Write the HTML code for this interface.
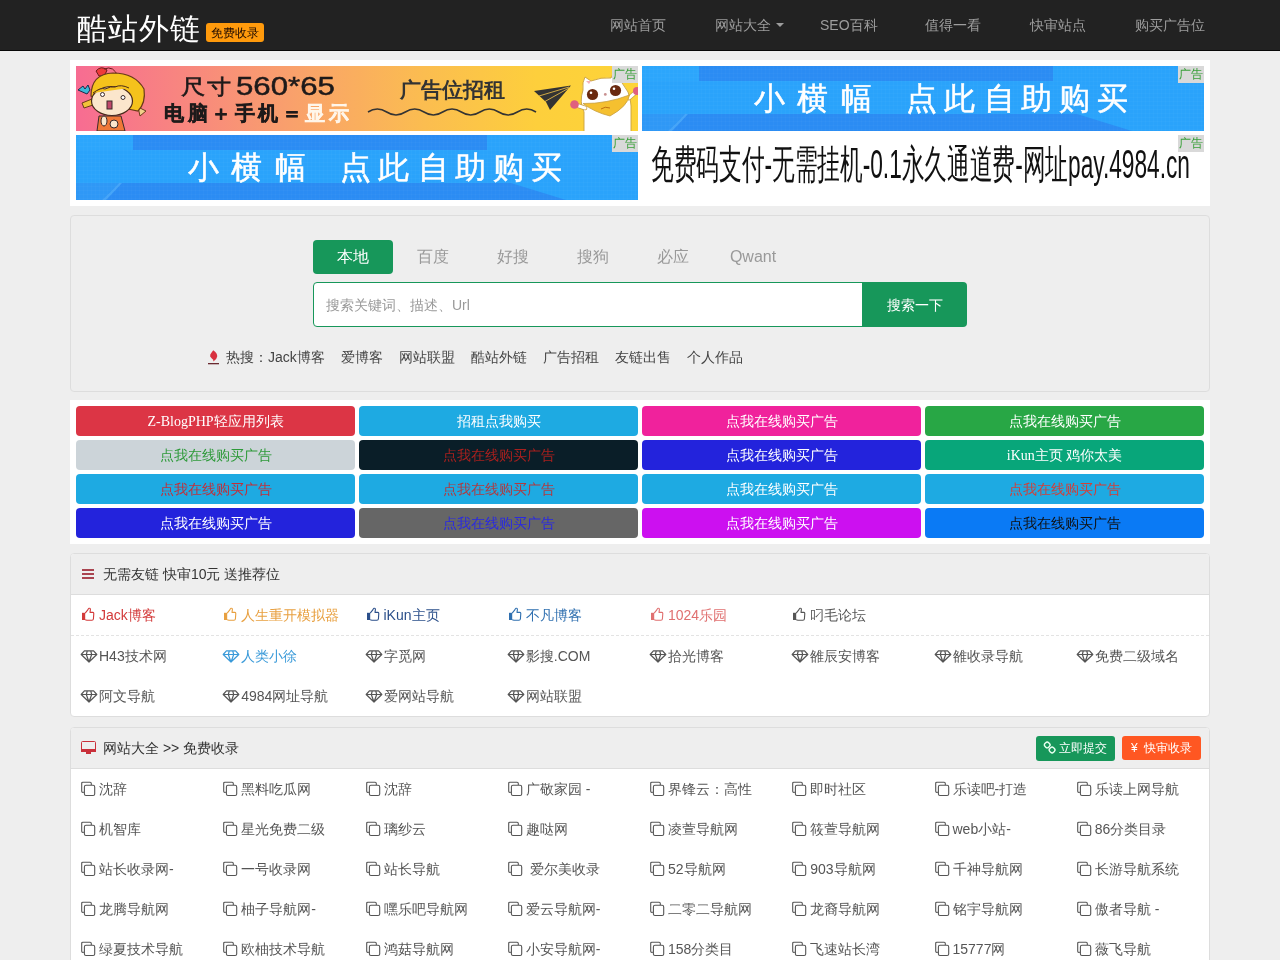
<!DOCTYPE html>
<html>
<head>
<meta charset="utf-8">
<title>酷站外链</title>
<style>
*{box-sizing:border-box;margin:0;padding:0}
html,body{width:1280px;height:960px;overflow:hidden}
body{will-change:transform;background:#eeeeee;font-family:"Liberation Sans",sans-serif;font-size:14px;color:#333;position:relative}
.abs{position:absolute}
#hdr{left:0;top:0;width:1280px;height:51px;background:#222;border-bottom:1px solid #080808}
#logo{left:77px;top:9px;letter-spacing:1px;font-family:"Liberation Serif",serif;font-size:30px;color:#fff;line-height:40px;white-space:nowrap}
#badge{left:206px;top:23px;width:58px;height:19px;background:#ff9a0c;border-radius:3px;font-family:"Liberation Serif",serif;font-size:12px;color:#1a0800;line-height:21px;text-align:center}
.nav{top:15px;font-size:14px;color:#9d9d9d;line-height:20px;white-space:nowrap}
.caret{display:inline-block;width:0;height:0;border-top:4px solid #9d9d9d;border-left:4px solid transparent;border-right:4px solid transparent;vertical-align:middle;margin-left:5px;margin-top:-2px}
#ads{left:70px;top:60px;width:1140px;height:146px;background:#fff}
.ad{width:562px;height:65px;overflow:hidden}
.adlbl{position:absolute;right:0;top:0;width:26px;height:17px;background:#d9d9d9;color:#3aa03a;font-size:12px;line-height:17px;text-align:center}
#search{left:70px;top:215px;width:1140px;height:177px;background:#eee;border:1px solid #ddd;border-radius:4px}
.tab{top:240px;width:80px;height:34px;line-height:34px;text-align:center;font-size:16px;color:#999;border-radius:4px}
.tab.on{background:#17975a;color:#fff}
#inp{left:313px;top:282px;width:550px;height:45px;background:#fff;border:1px solid #17975a;border-radius:4px 0 0 4px;color:#999;font-size:14px;line-height:45px;padding-left:12px}
#sbtn{left:862px;top:282px;width:105px;height:45px;background:#17975a;border-radius:0 4px 4px 0;color:#fff;font-size:14px;line-height:47px;text-align:center}
#hot{left:207px;padding-left:19px;top:347px;line-height:20px;font-size:14px;color:#444;white-space:nowrap}
#hot span{margin-right:16px}
#grid{left:70px;top:400px;width:1140px;height:144px;background:#fff}
.gb{width:279px;height:30px;border-radius:4px;text-align:center;line-height:32px;font-family:"Liberation Serif",serif;font-size:14px;color:#fff;white-space:nowrap}
.panel{left:70px;width:1140px;background:#fff;border:1px solid #ddd;border-radius:4px;overflow:hidden}
.ph{height:41px;background:#eee;border-bottom:1px solid #ddd;position:relative}
.pt{position:absolute;left:32px;top:10px;line-height:20px;font-size:14px;color:#333}
.lk{position:absolute;line-height:20px;font-size:14px;color:#555;white-space:nowrap}
</style>
</head>
<body>
<svg width="0" height="0" style="position:absolute">
<defs>
<symbol id="i-thumb" viewBox="0 0 14 14"><rect x="1" y="5.8" width="3.2" height="7.2" fill="currentColor"/><path d="M4.2 6.2 L6.6 3.2 Q7.4 1.4 8 1.2 Q9.4 1 9.4 2.6 L9 5.4 H12 Q12.8 5.4 12.8 6.4 L12.4 12 Q12.2 13.2 11 13.2 H6 Q4.8 13.2 4.2 12.6" fill="none" stroke="currentColor" stroke-width="1.1" stroke-linejoin="round"/></symbol>
<symbol id="i-dia" viewBox="0 0 18 16"><path d="M4.4 2.9 H13.6 L16.8 6.5 L9 14 L1.2 6.5 Z M1.2 6.5 H16.8 M7.3 2.9 L6.3 6.5 L9 14 M10.7 2.9 L11.7 6.5 L9 14" fill="none" stroke="currentColor" stroke-width="1.2" stroke-linejoin="round"/></symbol>
<symbol id="i-copy" viewBox="0 0 16 16"><path d="M3.8 11.4 H2.8 Q1.7 11.4 1.7 10.2 V2.4 Q1.7 1.2 2.9 1.2 H10.1 Q11.3 1.2 11.3 2.4 V4" fill="none" stroke="currentColor" stroke-width="1.1"/><rect x="4.4" y="4.3" width="10.3" height="10.2" rx="1.6" fill="none" stroke="currentColor" stroke-width="1.1"/></symbol>
</defs></svg>
<div id="hdr" class="abs"></div>
<div id="logo" class="abs">酷站外链</div>
<div id="badge" class="abs">免费收录</div>
<div class="abs nav" style="left:610px">网站首页</div>
<div class="abs nav" style="left:715px">网站大全<span class="caret"></span></div>
<div class="abs nav" style="left:820px">SEO百科</div>
<div class="abs nav" style="left:925px">值得一看</div>
<div class="abs nav" style="left:1030px">快审站点</div>
<div class="abs nav" style="left:1135px">购买广告位</div>

<div id="ads" class="abs"></div>
<div class="abs ad" style="left:76px;top:66px">
<svg width="562" height="65" viewBox="0 0 562 65">
<defs><linearGradient id="g1" x1="0" y1="0" x2="1" y2="0">
<stop offset="0" stop-color="#f76c92"/><stop offset="0.38" stop-color="#f9a06c"/><stop offset="0.62" stop-color="#fbbd50"/><stop offset="0.82" stop-color="#fdcf3c"/><stop offset="1" stop-color="#fdd438"/></linearGradient></defs>
<rect width="562" height="65" fill="url(#g1)"/>
<!-- girl -->
<path d="M20 5 q5 -6 11 -1 q-2 7 -8 6 z" fill="#ee3a3a" stroke="#6a1a1a" stroke-width="1"/>
<path d="M28 3 q10 -4 14 8" fill="none" stroke="#6a1a1a" stroke-width="1"/>
<path d="M2 24 l5 -4 l2 3 l3 -4 l2 5 l-3 4 z" fill="#3cb8d8" stroke="#1a2a4a" stroke-width="1"/>
<path d="M6 37 l10 -4 l1 6 l-9 3 z" fill="#f2c23a" stroke="#6a3a1a" stroke-width="1"/>
<path d="M62 41 l8 4 l-6 5 z" fill="#f2d08a" stroke="#6a3a1a" stroke-width="1"/>
<path d="M15 30 q0 -22 22 -23 q22 0 31 16 q2 14 -6 22 l-10 -2 z" fill="#f5c21c" stroke="#6a3a1a" stroke-width="1.2"/>
<ellipse cx="36" cy="35" rx="20.5" ry="14.5" fill="#fbe6cc" stroke="#4a2a1a" stroke-width="1.2"/>
<path d="M17 27 q8 -6 12 -4 q6 -3 10 -2 q6 -3 14 1" fill="#f5c21c" stroke="#4a2a1a" stroke-width="1"/>
<circle cx="26.5" cy="28.5" r="2" fill="#fff" stroke="#3a2a2a" stroke-width="1"/>
<circle cx="47" cy="31.5" r="2" fill="#fff" stroke="#3a2a2a" stroke-width="1"/>
<rect x="31" y="35" width="5" height="8" fill="#c0486a" stroke="#3a2a2a" stroke-width="1"/>
<path d="M23 50 l-2 15 h28 l-4 -15 z" fill="#f07838" stroke="#3a2a2a" stroke-width="1"/>
<ellipse cx="28" cy="55" rx="3" ry="5" fill="#fbe6cc" stroke="#3a2a2a" stroke-width="1"/>
<ellipse cx="38" cy="58" rx="4" ry="4" fill="#fbe6cc" stroke="#3a2a2a" stroke-width="1"/>
<!-- texts -->
<text transform="translate(105,28) scale(1.15,1)" font-family="Liberation Sans, sans-serif" font-size="21" fill="#1e1a1a" stroke="#1e1a1a" stroke-width="0.6" letter-spacing="1">尺寸</text>
<text transform="translate(160,29) scale(1.2,1)" font-family="Liberation Sans, sans-serif" font-size="26" fill="#1e1a1a" stroke="#1e1a1a" stroke-width="0.5">560*65</text>
<text x="88" y="54" font-family="Liberation Sans, sans-serif" font-size="20" font-weight="bold" fill="#1e1a1a" stroke="#1e1a1a" stroke-width="0.5" letter-spacing="3.5">电脑＋手机＝<tspan fill="#fff6ea" stroke="#fff6ea">显示</tspan></text>
<text x="324" y="31" font-family="Liberation Sans, sans-serif" font-size="21" font-weight="bold" fill="#333">广告位招租</text>
<path d="M292 46 q9.33 -6 18.67 0 t18.67 0 t18.67 0 t18.67 0 t18.67 0 t18.67 0 t18.67 0 t18.67 0 t18.67 0" fill="none" stroke="#333" stroke-width="1.5"/>
<!-- plane -->
<path d="M458 25 L495 19.5 L474 44 L470 36 z" fill="#333"/>
<path d="M463 30 L493 21 M468 36 L493 22" stroke="#f8c84a" stroke-width="0.8"/>
<!-- cat -->
<path d="M508 66 V46 Q503 36 507 24 Q506 16 509 11 L515 15 Q525 11 535 12 L537 8 Q547 16 552 26 Q555 34 555 40 V66 z" fill="#fff" stroke="#c8a040" stroke-width="0.9"/>
<path d="M509 42 L500 39 M553 32 L560 26" stroke="#c8a040" stroke-width="4.5" stroke-linecap="round"/>
<path d="M509 42 L500 39 M553 32 L560 26" stroke="#fff" stroke-width="3" stroke-linecap="round"/>
<circle cx="498.5" cy="38.5" r="4.3" fill="#e0607e"/>
<circle cx="561" cy="25" r="4" fill="#e0607e"/>
<path d="M507 37.5 Q530 38 553.5 29 Q552 40 534 50 Q518 46 507 37.5 z" fill="#f5c030" stroke="#c8a040" stroke-width="0.8"/>
<path d="M525 43 q4 -3 9 -1" stroke="#c07010" stroke-width="1" fill="none"/>
<path d="M510 15 l3 3 l2 -3 z" fill="#f4b0b8"/>
<circle cx="516.5" cy="28.5" r="5.6" fill="#6a2a10"/>
<circle cx="539.5" cy="24.5" r="5.6" fill="#6a2a10"/>
<circle cx="515" cy="26.8" r="1.3" fill="#fff"/><circle cx="538" cy="22.8" r="1.3" fill="#fff"/>
<circle cx="529.3" cy="28.4" r="1.4" fill="#c89090"/>
</svg>
<div class="adlbl">广告</div></div>

<div class="abs ad blue" style="left:642px;top:66px"><svg width="562" height="65" viewBox="0 0 562 65" style="position:absolute;left:0;top:0">
<defs><pattern id="gridp" width="4" height="4" patternUnits="userSpaceOnUse"><path d="M4 0 V4 M0 4 H4" stroke="#ffffff" stroke-opacity="0.035" stroke-width="1"/></pattern></defs>
<rect width="562" height="65" fill="#2b8cf3"/>
<rect x="0" y="0" width="57" height="15" fill="#2ca6fc"/>
<rect x="0" y="15" width="562" height="33" fill="#2aa3fb"/>
<path d="M411 0 H562 V65 H490 L435 48 H411 z" fill="#2aa3fb"/>
<path d="M0 48 H43 Q36 56 26 65 H0 z" fill="#2f98f6"/><path d="M26 65 Q36 56 43 48 H46 Q38 57 30 65 z" fill="#55b4fb" fill-opacity="0.6"/>
<rect width="562" height="65" fill="url(#gridp)"/>
<g font-family="Liberation Sans, sans-serif" font-size="31" fill="#fff" stroke="#fff" stroke-width="0.5">
<text x="112" y="43">小</text><text x="155" y="43">横</text><text x="199" y="43">幅</text>
<text x="264" y="43">点</text><text x="302" y="43">此</text><text x="342" y="43">自</text><text x="379" y="43">助</text><text x="417" y="43">购</text><text x="455" y="43">买</text>
</g></svg>
<div class="adlbl">广告</div></div>
<div class="abs ad blue" style="left:76px;top:135px"><svg width="562" height="65" viewBox="0 0 562 65" style="position:absolute;left:0;top:0">
<defs><pattern id="gridp2" width="4" height="4" patternUnits="userSpaceOnUse"><path d="M4 0 V4 M0 4 H4" stroke="#ffffff" stroke-opacity="0.035" stroke-width="1"/></pattern></defs>
<rect width="562" height="65" fill="#2b8cf3"/>
<rect x="0" y="0" width="57" height="15" fill="#2ca6fc"/>
<rect x="0" y="15" width="562" height="33" fill="#2aa3fb"/>
<path d="M411 0 H562 V65 H490 L435 48 H411 z" fill="#2aa3fb"/>
<path d="M0 48 H43 Q36 56 26 65 H0 z" fill="#2f98f6"/><path d="M26 65 Q36 56 43 48 H46 Q38 57 30 65 z" fill="#55b4fb" fill-opacity="0.6"/>
<rect width="562" height="65" fill="url(#gridp2)"/>
<g font-family="Liberation Sans, sans-serif" font-size="31" fill="#fff" stroke="#fff" stroke-width="0.5">
<text x="112" y="43">小</text><text x="155" y="43">横</text><text x="199" y="43">幅</text>
<text x="264" y="43">点</text><text x="302" y="43">此</text><text x="342" y="43">自</text><text x="379" y="43">助</text><text x="417" y="43">购</text><text x="455" y="43">买</text>
</g></svg>
<div class="adlbl">广告</div></div>
<div class="abs ad" style="left:642px;top:135px;background:#fff">
<div style="position:absolute;left:9px;top:4px;font-size:40px;line-height:50px;color:#111;white-space:nowrap;transform:scaleX(0.567);transform-origin:0 0">免费码支付-无需挂机-0.1永久通道费-网址pay.4984.cn</div>
<div class="adlbl">广告</div></div>


<div id="search" class="abs"></div>
<div class="abs tab on" style="left:313px">本地</div>
<div class="abs tab" style="left:393px">百度</div>
<div class="abs tab" style="left:473px">好搜</div>
<div class="abs tab" style="left:553px">搜狗</div>
<div class="abs tab" style="left:633px">必应</div>
<div class="abs tab" style="left:713px">Qwant</div>
<div id="inp" class="abs">搜索关键词、描述、Url</div>
<div id="sbtn" class="abs">搜索一下</div>
<div id="hot" class="abs"><svg style="position:absolute;left:1px;top:3px" width="12" height="15"><path d="M5.2 0.2 Q9.6 3.2 9.2 6.6 Q8.8 9.6 5.4 11.6 Q5.9 9.6 3.6 8.2 Q1.4 6.6 2.3 4.6 Q3.4 2.6 5.2 0.2 z" fill="#d8303e"/><rect x="0" y="13" width="11" height="1.3" fill="#6a2a30"/></svg>热搜：<span>Jack博客</span><span>爱博客</span><span>网站联盟</span><span>酷站外链</span><span>广告招租</span><span>友链出售</span><span>个人作品</span></div>

<div id="grid" class="abs"></div>
<div class="abs gb" style="left:76px;top:406px;background:#dc3545;color:#fff">Z-BlogPHP轻应用列表</div>
<div class="abs gb" style="left:359px;top:406px;background:#1eaae2;color:#fff">招租点我购买</div>
<div class="abs gb" style="left:642px;top:406px;background:#f0229c;color:#fff">点我在线购买广告</div>
<div class="abs gb" style="left:925px;top:406px;background:#28a745;color:#fff">点我在线购买广告</div>
<div class="abs gb" style="left:76px;top:440px;background:#ccd4d9;color:#2e9a3a">点我在线购买广告</div>
<div class="abs gb" style="left:359px;top:440px;background:#0a1e28;color:#a8201e">点我在线购买广告</div>
<div class="abs gb" style="left:642px;top:440px;background:#2323dc;color:#fff">点我在线购买广告</div>
<div class="abs gb" style="left:925px;top:440px;background:#08a67a;color:#fff">iKun主页 鸡你太美</div>
<div class="abs gb" style="left:76px;top:474px;background:#1eaae2;color:#c0303a">点我在线购买广告</div>
<div class="abs gb" style="left:359px;top:474px;background:#1eaae2;color:#b03a40">点我在线购买广告</div>
<div class="abs gb" style="left:642px;top:474px;background:#1eaae2;color:#fff">点我在线购买广告</div>
<div class="abs gb" style="left:925px;top:474px;background:#1eaae2;color:#d0403a">点我在线购买广告</div>
<div class="abs gb" style="left:76px;top:508px;background:#2323dc;color:#fff">点我在线购买广告</div>
<div class="abs gb" style="left:359px;top:508px;background:#666666;color:#2a2ae0">点我在线购买广告</div>
<div class="abs gb" style="left:642px;top:508px;background:#cc10f0;color:#fff">点我在线购买广告</div>
<div class="abs gb" style="left:925px;top:508px;background:#0a7af5;color:#111">点我在线购买广告</div>

<div class="abs panel" style="top:553px;height:164px">
 <div class="ph"><div class="pt">无需友链 快审10元 送推荐位</div></div>
</div>
<div class="abs" style="left:71px;top:635px;width:1138px;height:0;border-top:1px dashed #e3e3e3"></div>
<svg class="abs" style="left:82px;top:569px" width="12" height="10"><rect y="0" width="12" height="2" fill="#a94450"/><rect y="4" width="12" height="2" fill="#a94450"/><rect y="8" width="12" height="2" fill="#a94450"/></svg>
<svg class="abs" style="left:81.00px;top:607px;color:#d33a3a" width="14" height="14"><use href="#i-thumb"/></svg><div class="lk" style="left:99.00px;top:605px;color:#d33a3a">Jack博客</div>
<svg class="abs" style="left:223.25px;top:607px;color:#e8a040" width="14" height="14"><use href="#i-thumb"/></svg><div class="lk" style="left:241.25px;top:605px;color:#e8a040">人生重开模拟器</div>
<svg class="abs" style="left:365.50px;top:607px;color:#2b4f8a" width="14" height="14"><use href="#i-thumb"/></svg><div class="lk" style="left:383.50px;top:605px;color:#2b4f8a">iKun主页</div>
<svg class="abs" style="left:507.75px;top:607px;color:#3070b0" width="14" height="14"><use href="#i-thumb"/></svg><div class="lk" style="left:525.75px;top:605px;color:#3070b0">不凡博客</div>
<svg class="abs" style="left:650.00px;top:607px;color:#e07070" width="14" height="14"><use href="#i-thumb"/></svg><div class="lk" style="left:668.00px;top:605px;color:#e07070">1024乐园</div>
<svg class="abs" style="left:792.25px;top:607px;color:#555" width="14" height="14"><use href="#i-thumb"/></svg><div class="lk" style="left:810.25px;top:605px;color:#555">叼毛论坛</div>
<svg class="abs" style="left:80.00px;top:648px;color:#555" width="18" height="16"><use href="#i-dia"/></svg><div class="lk" style="left:99.00px;top:646px;color:#555">H43技术网</div>
<svg class="abs" style="left:222.25px;top:648px;color:#3a9ad9" width="18" height="16"><use href="#i-dia"/></svg><div class="lk" style="left:241.25px;top:646px;color:#3a9ad9">人类小徐</div>
<svg class="abs" style="left:364.50px;top:648px;color:#555" width="18" height="16"><use href="#i-dia"/></svg><div class="lk" style="left:383.50px;top:646px;color:#555">字觅网</div>
<svg class="abs" style="left:506.75px;top:648px;color:#555" width="18" height="16"><use href="#i-dia"/></svg><div class="lk" style="left:525.75px;top:646px;color:#555">影搜.COM</div>
<svg class="abs" style="left:649.00px;top:648px;color:#555" width="18" height="16"><use href="#i-dia"/></svg><div class="lk" style="left:668.00px;top:646px;color:#555">拾光博客</div>
<svg class="abs" style="left:791.25px;top:648px;color:#555" width="18" height="16"><use href="#i-dia"/></svg><div class="lk" style="left:810.25px;top:646px;color:#555">雒辰安博客</div>
<svg class="abs" style="left:933.50px;top:648px;color:#555" width="18" height="16"><use href="#i-dia"/></svg><div class="lk" style="left:952.50px;top:646px;color:#555">雒收录导航</div>
<svg class="abs" style="left:1075.75px;top:648px;color:#555" width="18" height="16"><use href="#i-dia"/></svg><div class="lk" style="left:1094.75px;top:646px;color:#555">免费二级域名</div>
<svg class="abs" style="left:80.00px;top:688px;color:#555" width="18" height="16"><use href="#i-dia"/></svg><div class="lk" style="left:99.00px;top:686px;color:#555">阿文导航</div>
<svg class="abs" style="left:222.25px;top:688px;color:#555" width="18" height="16"><use href="#i-dia"/></svg><div class="lk" style="left:241.25px;top:686px;color:#555">4984网址导航</div>
<svg class="abs" style="left:364.50px;top:688px;color:#555" width="18" height="16"><use href="#i-dia"/></svg><div class="lk" style="left:383.50px;top:686px;color:#555">爱网站导航</div>
<svg class="abs" style="left:506.75px;top:688px;color:#555" width="18" height="16"><use href="#i-dia"/></svg><div class="lk" style="left:525.75px;top:686px;color:#555">网站联盟</div>

<div class="abs panel" style="top:727px;height:260px">
 <div class="ph"><div class="pt">网站大全 &gt;&gt; 免费收录</div></div>
</div>
<svg class="abs" style="left:81px;top:741px" width="15" height="13"><rect x="0.5" y="0.5" width="14" height="10" rx="1" fill="none" stroke="#c9303a" stroke-width="1"/><rect x="0" y="8" width="15" height="3" fill="#c9303a"/><rect x="5" y="11" width="5" height="2" fill="#c9303a"/></svg>
<svg class="abs" style="left:80.00px;top:781px;color:#555" width="16" height="16"><use href="#i-copy"/></svg><div class="lk" style="left:99.00px;top:779px;color:#555">沈辞</div>
<svg class="abs" style="left:222.25px;top:781px;color:#555" width="16" height="16"><use href="#i-copy"/></svg><div class="lk" style="left:241.25px;top:779px;color:#555">黑料吃瓜网</div>
<svg class="abs" style="left:364.50px;top:781px;color:#555" width="16" height="16"><use href="#i-copy"/></svg><div class="lk" style="left:383.50px;top:779px;color:#555">沈辞</div>
<svg class="abs" style="left:506.75px;top:781px;color:#555" width="16" height="16"><use href="#i-copy"/></svg><div class="lk" style="left:525.75px;top:779px;color:#555">广敬家园 -</div>
<svg class="abs" style="left:649.00px;top:781px;color:#555" width="16" height="16"><use href="#i-copy"/></svg><div class="lk" style="left:668.00px;top:779px;color:#555">界锋云：高性</div>
<svg class="abs" style="left:791.25px;top:781px;color:#555" width="16" height="16"><use href="#i-copy"/></svg><div class="lk" style="left:810.25px;top:779px;color:#555">即时社区</div>
<svg class="abs" style="left:933.50px;top:781px;color:#555" width="16" height="16"><use href="#i-copy"/></svg><div class="lk" style="left:952.50px;top:779px;color:#555">乐读吧-打造</div>
<svg class="abs" style="left:1075.75px;top:781px;color:#555" width="16" height="16"><use href="#i-copy"/></svg><div class="lk" style="left:1094.75px;top:779px;color:#555">乐读上网导航</div>
<svg class="abs" style="left:80.00px;top:821px;color:#555" width="16" height="16"><use href="#i-copy"/></svg><div class="lk" style="left:99.00px;top:819px;color:#555">机智库</div>
<svg class="abs" style="left:222.25px;top:821px;color:#555" width="16" height="16"><use href="#i-copy"/></svg><div class="lk" style="left:241.25px;top:819px;color:#555">星光免费二级</div>
<svg class="abs" style="left:364.50px;top:821px;color:#555" width="16" height="16"><use href="#i-copy"/></svg><div class="lk" style="left:383.50px;top:819px;color:#555">璃纱云</div>
<svg class="abs" style="left:506.75px;top:821px;color:#555" width="16" height="16"><use href="#i-copy"/></svg><div class="lk" style="left:525.75px;top:819px;color:#555">趣哒网</div>
<svg class="abs" style="left:649.00px;top:821px;color:#555" width="16" height="16"><use href="#i-copy"/></svg><div class="lk" style="left:668.00px;top:819px;color:#555">凌萱导航网</div>
<svg class="abs" style="left:791.25px;top:821px;color:#555" width="16" height="16"><use href="#i-copy"/></svg><div class="lk" style="left:810.25px;top:819px;color:#555">筱萱导航网</div>
<svg class="abs" style="left:933.50px;top:821px;color:#555" width="16" height="16"><use href="#i-copy"/></svg><div class="lk" style="left:952.50px;top:819px;color:#555">web小站-</div>
<svg class="abs" style="left:1075.75px;top:821px;color:#555" width="16" height="16"><use href="#i-copy"/></svg><div class="lk" style="left:1094.75px;top:819px;color:#555">86分类目录</div>
<svg class="abs" style="left:80.00px;top:861px;color:#555" width="16" height="16"><use href="#i-copy"/></svg><div class="lk" style="left:99.00px;top:859px;color:#555">站长收录网-</div>
<svg class="abs" style="left:222.25px;top:861px;color:#555" width="16" height="16"><use href="#i-copy"/></svg><div class="lk" style="left:241.25px;top:859px;color:#555">一号收录网</div>
<svg class="abs" style="left:364.50px;top:861px;color:#555" width="16" height="16"><use href="#i-copy"/></svg><div class="lk" style="left:383.50px;top:859px;color:#555">站长导航</div>
<svg class="abs" style="left:506.75px;top:861px;color:#555" width="16" height="16"><use href="#i-copy"/></svg><div class="lk" style="left:525.75px;top:859px;color:#555">&nbsp;爱尔美收录</div>
<svg class="abs" style="left:649.00px;top:861px;color:#555" width="16" height="16"><use href="#i-copy"/></svg><div class="lk" style="left:668.00px;top:859px;color:#555">52导航网</div>
<svg class="abs" style="left:791.25px;top:861px;color:#555" width="16" height="16"><use href="#i-copy"/></svg><div class="lk" style="left:810.25px;top:859px;color:#555">903导航网</div>
<svg class="abs" style="left:933.50px;top:861px;color:#555" width="16" height="16"><use href="#i-copy"/></svg><div class="lk" style="left:952.50px;top:859px;color:#555">千神导航网</div>
<svg class="abs" style="left:1075.75px;top:861px;color:#555" width="16" height="16"><use href="#i-copy"/></svg><div class="lk" style="left:1094.75px;top:859px;color:#555">长游导航系统</div>
<svg class="abs" style="left:80.00px;top:901px;color:#555" width="16" height="16"><use href="#i-copy"/></svg><div class="lk" style="left:99.00px;top:899px;color:#555">龙腾导航网</div>
<svg class="abs" style="left:222.25px;top:901px;color:#555" width="16" height="16"><use href="#i-copy"/></svg><div class="lk" style="left:241.25px;top:899px;color:#555">柚子导航网-</div>
<svg class="abs" style="left:364.50px;top:901px;color:#555" width="16" height="16"><use href="#i-copy"/></svg><div class="lk" style="left:383.50px;top:899px;color:#555">嘿乐吧导航网</div>
<svg class="abs" style="left:506.75px;top:901px;color:#555" width="16" height="16"><use href="#i-copy"/></svg><div class="lk" style="left:525.75px;top:899px;color:#555">爱云导航网-</div>
<svg class="abs" style="left:649.00px;top:901px;color:#555" width="16" height="16"><use href="#i-copy"/></svg><div class="lk" style="left:668.00px;top:899px;color:#555">二零二导航网</div>
<svg class="abs" style="left:791.25px;top:901px;color:#555" width="16" height="16"><use href="#i-copy"/></svg><div class="lk" style="left:810.25px;top:899px;color:#555">龙裔导航网</div>
<svg class="abs" style="left:933.50px;top:901px;color:#555" width="16" height="16"><use href="#i-copy"/></svg><div class="lk" style="left:952.50px;top:899px;color:#555">铭宇导航网</div>
<svg class="abs" style="left:1075.75px;top:901px;color:#555" width="16" height="16"><use href="#i-copy"/></svg><div class="lk" style="left:1094.75px;top:899px;color:#555">傲者导航 -</div>
<svg class="abs" style="left:80.00px;top:941px;color:#555" width="16" height="16"><use href="#i-copy"/></svg><div class="lk" style="left:99.00px;top:939px;color:#555">绿夏技术导航</div>
<svg class="abs" style="left:222.25px;top:941px;color:#555" width="16" height="16"><use href="#i-copy"/></svg><div class="lk" style="left:241.25px;top:939px;color:#555">欧柚技术导航</div>
<svg class="abs" style="left:364.50px;top:941px;color:#555" width="16" height="16"><use href="#i-copy"/></svg><div class="lk" style="left:383.50px;top:939px;color:#555">鸿菇导航网</div>
<svg class="abs" style="left:506.75px;top:941px;color:#555" width="16" height="16"><use href="#i-copy"/></svg><div class="lk" style="left:525.75px;top:939px;color:#555">小安导航网-</div>
<svg class="abs" style="left:649.00px;top:941px;color:#555" width="16" height="16"><use href="#i-copy"/></svg><div class="lk" style="left:668.00px;top:939px;color:#555">158分类目</div>
<svg class="abs" style="left:791.25px;top:941px;color:#555" width="16" height="16"><use href="#i-copy"/></svg><div class="lk" style="left:810.25px;top:939px;color:#555">飞速站长湾</div>
<svg class="abs" style="left:933.50px;top:941px;color:#555" width="16" height="16"><use href="#i-copy"/></svg><div class="lk" style="left:952.50px;top:939px;color:#555">15777网</div>
<svg class="abs" style="left:1075.75px;top:941px;color:#555" width="16" height="16"><use href="#i-copy"/></svg><div class="lk" style="left:1094.75px;top:939px;color:#555">薇飞导航</div>
<div class="abs" style="left:1036px;top:736px;width:79px;height:25px;background:#17975a;border-radius:3px"></div>
<svg class="abs" style="left:1043px;top:741px" width="14" height="14"><g fill="none" stroke="#e8fff0" stroke-width="1.4"><rect x="1.6" y="1.3" width="5.2" height="5.2" rx="2" transform="rotate(45 4.2 3.9)"/><rect x="6.5" y="6.4" width="5.2" height="5.2" rx="2" transform="rotate(45 9.1 9)"/></g></svg>
<div class="abs" style="left:1059px;top:738px;line-height:20px;font-size:12px;color:#fff;white-space:nowrap">立即提交</div>
<div class="abs" style="left:1122px;top:736px;width:79px;height:24px;background:#ff5722;border-radius:3px"></div>
<div class="abs" style="left:1131px;top:738px;line-height:20px;font-size:12px;color:#fff;white-space:nowrap">¥&nbsp;&nbsp;快审收录</div>
</body>
</html>
